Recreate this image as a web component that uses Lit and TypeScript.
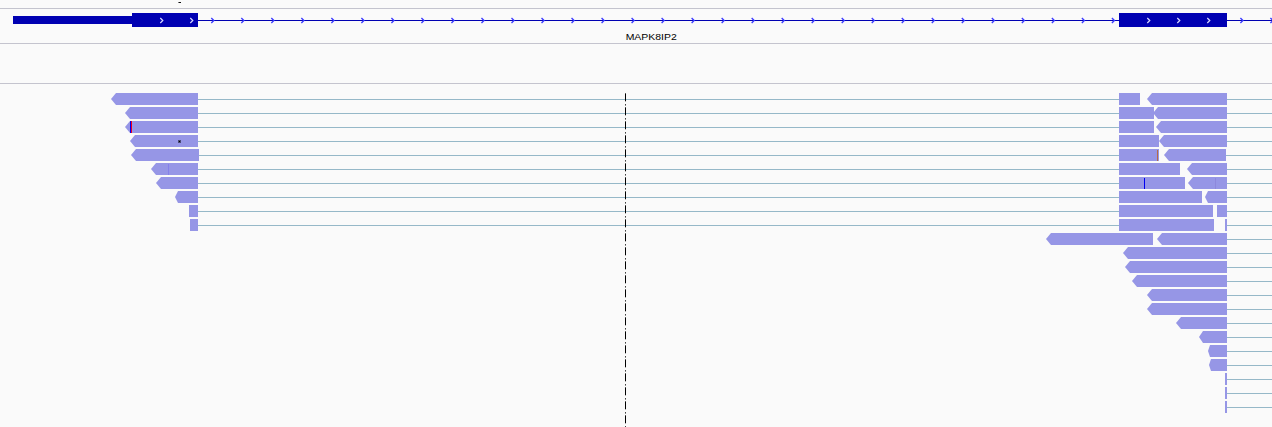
import { LitElement, html, svg, css } from "lit";
import { customElement } from "lit/decorators.js";

// [start, end, arrow depth]; depth 0 draws a plain block
type Block = [number, number, number];

const LEFT: Block[] = [
  [111, 198, 5], [125, 198, 5], [125, 198, 5], [130, 198, 5], [131, 199, 5],
  [151, 198, 5], [156, 198, 5], [175, 198, 3], [189, 198, 0], [190, 198, 0],
];
const MIDDLE_ENDS = [1140, 1154, 1154, 1159, 1159, 1180, 1185, 1202, 1213, 1214];
const RIGHT: Block[] = [
  [1147, 1227, 5], [1153, 1227, 5], [1156, 1227, 5], [1159, 1227, 5], [1164, 1226, 5],
  [1187, 1227, 5], [1188, 1227, 5], [1205, 1227, 3], [1217, 1227, 0], [1225, 1227, 0],
  [1157, 1227, 5], [1123, 1227, 5], [1125, 1227, 5], [1132, 1227, 5], [1147, 1227, 5],
  [1147, 1227, 5], [1176, 1227, 5], [1199, 1227, 4], [1208, 1227, 2], [1209, 1227, 2],
  [1225, 1227, 0], [1225, 1227, 0], [1225, 1227, 0],
];

const block = ([a, b, d]: Block) =>
  svg`<path class="read" d="M${a} 6L${a + d} 0H${b}V12H${a + d}Z"/>`;
const plain = (a: number, b: number) =>
  svg`<rect class="read" x=${a} y="0" width=${b - a} height="12"/>`;
const draw = (b: Block) => (b[2] ? block(b) : plain(b[0], b[1]));

const mark = (x: number, color: string, y = 0, h = 12) =>
  svg`<rect x=${x} y=${y} width="1" height=${h} fill=${color}/>`;

const variants: Record<number, unknown> = {
  2: [mark(130, "#0000f0"), mark(131, "#f00020")],
  3: [svg`<rect x="178" y="5" width="3" height="3" fill="#4b4b75"/><rect x="179" y="6" width="1" height="1" fill="#000"/>`],
  4: [mark(1157, "#b66b4a", 1, 11)],
  5: [mark(168, "#8580ea", 1, 11)],
  6: [mark(1144, "#0000f0", 1, 11), mark(1215, "#8d88dc", 1, 11)],
};

@customElement("gene-track")
export class GeneTrack extends LitElement {
  static styles = css`
    :host { display: block; height: 34px; border-top: 1px solid #c4c4ce; border-bottom: 1px solid #c4c4ce; }
    svg { display: block; width: 1272px; height: 34px; }
    .exon { fill: #0000b2; }
    .chev { fill: none; stroke: #3c3cff; stroke-width: 1.4; }
    .chev.in { stroke: #d8d8ff; stroke-width: 1.2; }
    .name { font: 9.5px "Liberation Sans", Arial, sans-serif; fill: #000; }
  `;
  render() {
    const chevron = (x: number, inside: boolean) =>
      svg`<path class=${inside ? "chev in" : "chev"} d="M${x} 9l2.5 2.5l-2.5 2.5"/>`;
    const intron = Array.from({ length: 31 }, (_, i) => 211.3 + i * 30.02);
    return html`<svg viewBox="0 0 1272 34">
        <rect class="exon" x="13" y="7" width="119" height="8"/>
        <rect class="exon" x="132" y="4" width="66" height="14"/>
        <rect class="exon" x="198" y="11" width="1074" height="1"/>
        <rect class="exon" x="1119" y="4" width="108" height="14"/>
        ${[160.3, 190.3, 1147.3, 1177.3, 1207.3].map((x) => chevron(x, true))}
        ${[...intron, 1240.4, 1270.4].map((x) => chevron(x, false))}
        <text class="name" x="625.7" y="31" textLength="51" lengthAdjust="spacingAndGlyphs">MAPK8IP2</text>
      </svg>`;
  }
}

@customElement("read-track")
export class ReadTrack extends LitElement {
  static styles = css`
    :host { display: block; height: 334px; padding-top: 9px; box-sizing: content-box; position: relative; overflow: hidden; }
    .row { display: block; width: 1272px; height: 12px; margin-bottom: 2px; }
    .read { fill: #9696e6; }
    .link { fill: #96b8c8; }
    .center { position: absolute; left: 625px; top: 9px; width: 1px; height: 334px; }
  `;
  render() {
    return html`${RIGHT.map((r, i) => html`<svg class="row" viewBox="0 0 1272 12">
        ${i < 10 ? svg`<rect class="link" x=${LEFT[i][1]} y="6" width=${1119 - LEFT[i][1]} height="1"/>` : ""}
        <rect class="link" x=${r[1]} y="6" width=${1272 - r[1]} height="1"/>
        ${i < 10 ? [draw(LEFT[i]), plain(1119, MIDDLE_ENDS[i])] : ""}
        ${i === 10 ? draw([1046, 1153, 5]) : ""}
        ${draw(r)}
        ${variants[i] ?? ""}
      </svg>`)}
      <svg class="center" viewBox="0 0 1 334">
        ${Array.from({ length: 24 }, (_, i) => svg`<rect x="0" y=${i * 14 + 1} width="1" height="7" fill="#000"/><rect x="0" y=${i * 14} width="1" height="1" fill="#555"/><rect x="0" y=${i * 14 + 8} width="1" height="1" fill="#aaa"/><rect x="0" y=${i * 14 + 11} width="1" height="1" fill="#444"/><rect x="0" y=${i * 14 + 12} width="1" height="1" fill="#888"/>`)}
      </svg>`;
  }
}

@customElement("app-root")
export class AppRoot extends LitElement {
  static styles = css`
    :host { display: block; width: 1272px; height: 427px; overflow: hidden; background: #fafafa; }
    .ruler { display: block; width: 1272px; height: 8px; }
    .coverage { height: 39px; border-bottom: 1px solid #c4c4ce; }
  `;
  render() {
    return html`<svg class="ruler" viewBox="0 0 1272 8">
        <rect x="178" y="2" width="1" height="1" fill="#777"/><rect x="179" y="2" width="2" height="1" fill="#111"/>
      </svg>
      <gene-track></gene-track>
      <div class="coverage"></div>
      <read-track></read-track>`;
  }
}
